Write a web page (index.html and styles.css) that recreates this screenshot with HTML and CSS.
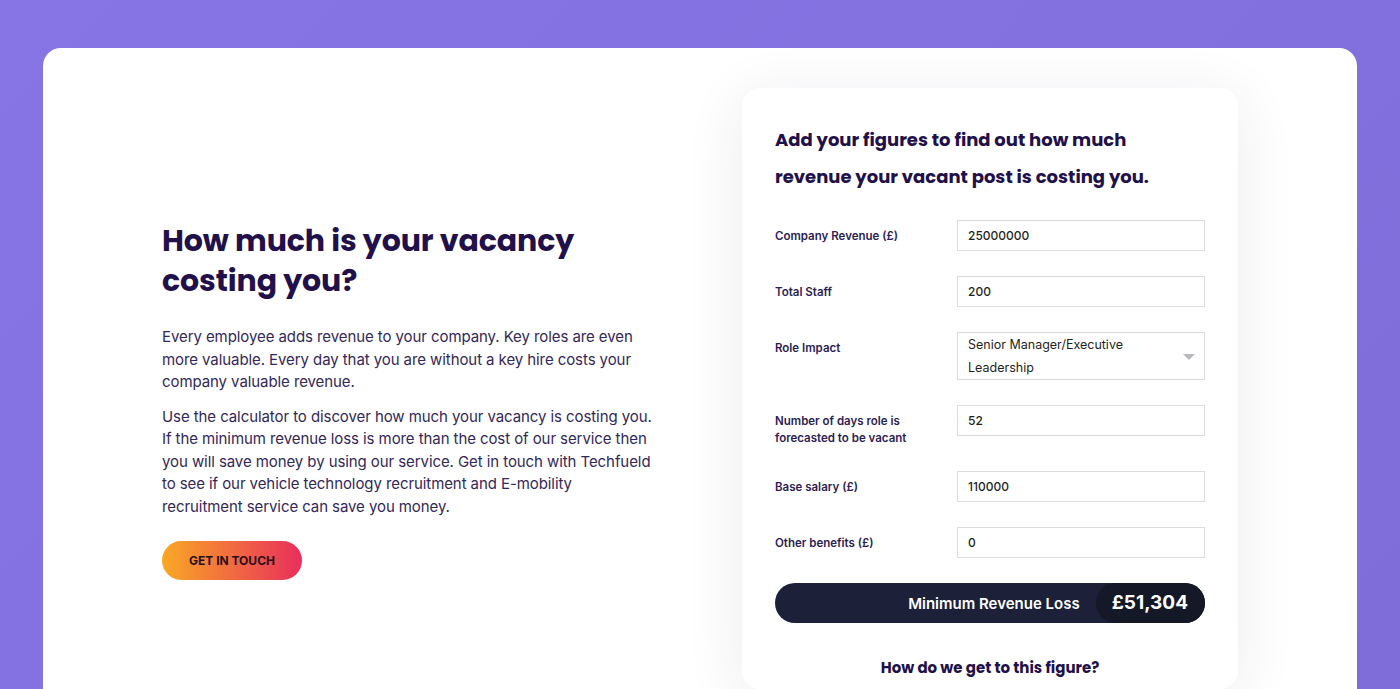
FILE: index.html
```html
<!DOCTYPE html>
<html lang="en">

<head>
    <meta charset="UTF-8">
    <meta name="viewport" content="width=device-width, initial-scale=1.0">
    <title>Vacancy Cost Calculator</title>
    <link rel="stylesheet" href="styles.css">
</head>

<body>

    <div class="page">
        <div class="panel">
            <div class="intro">
                <h1>How much is your vacancy costing you?</h1>
                <p>Every employee adds revenue to your company. Key roles are even more valuable. Every day that you are without a key hire costs your company valuable revenue.</p>
                <p>Use the calculator to discover how much your vacancy is costing you. If the minimum revenue loss is more than the cost of our service then you will save money by using our service. Get in touch with Techfueld to see if our vehicle technology recruitment and E-mobility recruitment service can save you money.</p>
                <a class="btn" href="#">GET IN TOUCH</a>
            </div>

            <div class="calc">
                <h2>Add your figures to find out how much revenue your vacant post is costing you.</h2>

                <div class="row">
                    <label for="revenue">Company Revenue (£)</label>
                    <input type="text" id="revenue" value="25000000">
                </div>
                <div class="row">
                    <label for="staff">Total Staff</label>
                    <input type="text" id="staff" value="200">
                </div>
                <div class="row">
                    <label>Role Impact</label>
                    <div class="select">
                        <span>Senior Manager/Executive Leadership</span>
                        <i class="caret"></i>
                    </div>
                </div>
                <div class="row">
                    <label for="days">Number of days role is forecasted to be vacant</label>
                    <input type="text" id="days" value="52">
                </div>
                <div class="row">
                    <label for="salary">Base salary (£)</label>
                    <input type="text" id="salary" value="110000">
                </div>
                <div class="row">
                    <label for="benefits">Other benefits (£)</label>
                    <input type="text" id="benefits" value="0">
                </div>

                <div class="result">
                    <span class="result-label">Minimum Revenue Loss</span>
                    <span class="result-value">£51,304</span>
                </div>

                <h3>How do we get to this figure?</h3>
            </div>
        </div>
    </div>

</body>

</html>
```

FILE: styles.css
```css
body {
    margin: 0;
    padding: 0;
    font-family: Inter, "Liberation Sans", sans-serif;
    background: linear-gradient(135deg, #8775e6, #7f6dd9);
    height: 689px;
    overflow: hidden;
}

.page {
    padding: 48px 43px 0;
}

.panel {
    display: flex;
    justify-content: space-between;
    background-color: #fff;
    border-radius: 18px 18px 0 0;
    padding: 40px 119px 0;
    height: 601px;
    overflow: hidden;
}

.intro {
    width: 492px;
    padding-top: 133px;
    color: #33285a;
}

.intro h1 {
    font-family: Poppins, "DejaVu Sans", sans-serif;
    font-weight: 700;
    font-size: 30px;
    line-height: 40px;
    letter-spacing: -0.1px;
    color: #22104a;
    margin: 0 0 25px;
}

.intro p {
    font-size: 15px;
    line-height: 22.5px;
    letter-spacing: -0.08px;
    margin: 0 0 12px;
}

.btn {
    display: inline-block;
    margin-top: 11px;
    width: 140px;
    height: 39px;
    line-height: 39px;
    text-align: center;
    border-radius: 20px;
    background: linear-gradient(90deg, #f9a825, #e92e5c);
    color: #2a0f1a;
    font-size: 12px;
    font-weight: 700;
    text-decoration: none;
}

.calc {
    width: 430px;
    padding: 33px 33px 0;
    background-color: #fff;
    border-radius: 18px;
    box-shadow: 0 10px 60px rgba(40, 30, 80, 0.09);
}

.calc h2 {
    max-width: 390px;
    font-family: Poppins, "DejaVu Sans", sans-serif;
    font-weight: 700;
    font-size: 18px;
    line-height: 37px;
    color: #22104a;
    margin: 0 0 25px;
}

.row {
    display: flex;
    align-items: flex-start;
    margin-bottom: 25px;
}

.row label {
    width: 182px;
    flex-shrink: 0;
    padding-top: 8px;
    font-size: 11.5px;
    line-height: 16.5px;
    font-weight: 600;
    color: #2d1d55;
}

.row input,
.select {
    width: 248px;
    box-sizing: border-box;
    border: 1px solid #dcdcdc;
    font-family: Inter, "Liberation Sans", sans-serif;
    color: #1f1f24;
}

.row input {
    height: 31px;
    padding: 0 10px;
    font-size: 12px;
    font-weight: 500;
    outline: none;
}

.select {
    position: relative;
    padding: 0 40px 0 10px;
    font-size: 12.5px;
    line-height: 23px;
}

.caret {
    position: absolute;
    right: 9px;
    top: 21px;
    width: 0;
    height: 0;
    border-left: 6px solid transparent;
    border-right: 6px solid transparent;
    border-top: 6px solid #b8b8bc;
}

.result {
    display: flex;
    justify-content: flex-end;
    align-items: center;
    height: 40px;
    border-radius: 20px;
    background-color: #1c2039;
    color: #fff;
    margin-top: 2px;
}

.result-label {
    font-size: 15px;
    font-weight: 600;
    margin-right: 16px;
}

.result-value {
    height: 40px;
    line-height: 40px;
    padding: 0 17px 0 16px;
    border-radius: 20px;
    background-color: #141827;
    font-size: 19px;
    font-weight: 700;
}

.calc h3 {
    font-family: Poppins, "DejaVu Sans", sans-serif;
    font-weight: 700;
    font-size: 15px;
    text-align: center;
    color: #22104a;
    margin: 33px 0 0;
}
```
